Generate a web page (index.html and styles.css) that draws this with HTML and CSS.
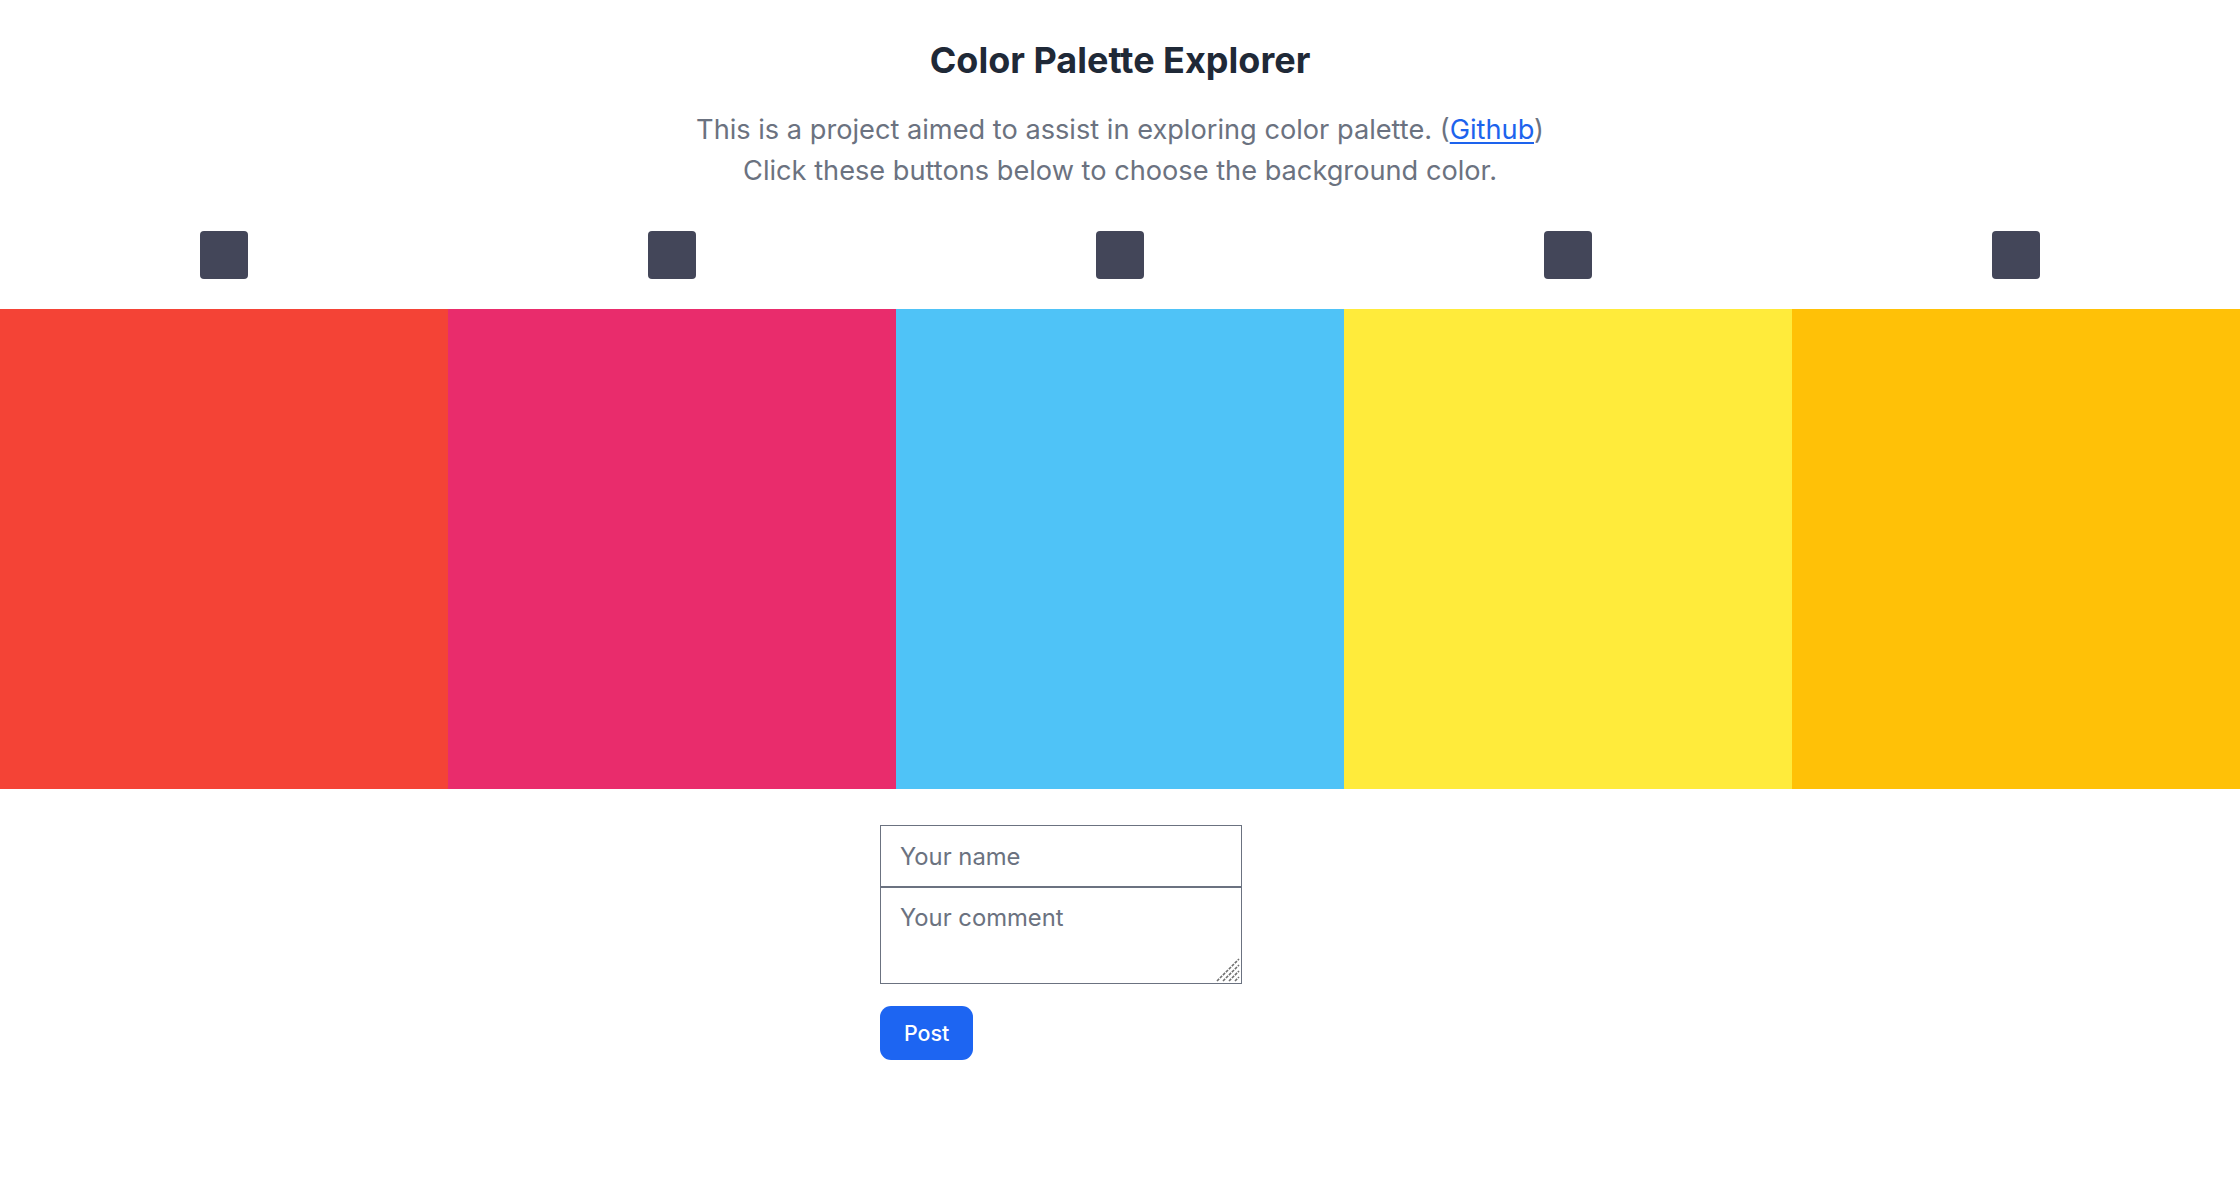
FILE: index.html
```html
<!DOCTYPE html>
<html lang="en">
<head>
<meta charset="utf-8">
<title>Color Palette Explorer</title>
<link rel="stylesheet" href="styles.css">
</head>
<body>
<header class="intro">
  <h1 class="title">Color Palette Explorer</h1>
  <p class="lead">This is a project aimed to assist in exploring color palette. (<a class="link" href="#">Github</a>)<br>Click these buttons below to choose the background color.</p>
</header>
<div class="pickers">
  <div class="picker-cell"><button class="picker" aria-label="Pick color 1"></button></div>
  <div class="picker-cell"><button class="picker" aria-label="Pick color 2"></button></div>
  <div class="picker-cell"><button class="picker" aria-label="Pick color 3"></button></div>
  <div class="picker-cell"><button class="picker" aria-label="Pick color 4"></button></div>
  <div class="picker-cell"><button class="picker" aria-label="Pick color 5"></button></div>
</div>
<div class="palette">
  <div class="swatch swatch-red"></div>
  <div class="swatch swatch-pink"></div>
  <div class="swatch swatch-blue"></div>
  <div class="swatch swatch-yellow"></div>
  <div class="swatch swatch-amber"></div>
</div>
<form class="comment-form">
  <div class="fields">
    <input class="field field-name" type="text" placeholder="Your name">
    <div class="comment-wrap">
      <textarea class="field field-comment" placeholder="Your comment"></textarea>
      <svg class="grip" width="24" height="24" viewBox="0 0 24 24" aria-hidden="true">
        <path d="M1 23 L23 1 M7 23 L23 7 M13 23 L23 13 M19 23 L23 19" stroke="#707070" stroke-width="1.6" stroke-dasharray="3 1.2" fill="none"/>
      </svg>
    </div>
  </div>
  <button class="post" type="button">Post</button>
</form>
</body>
</html>
```

FILE: styles.css
```css
* { box-sizing: border-box; }
html, body { margin: 0; padding: 0; background: #ffffff; }
body {
  font-family: Inter, "Noto Sans", "Liberation Sans", sans-serif;
  color: #1f2937;
}
.intro {
  text-align: center;
  padding-top: 37px;
}
.title {
  margin: 0;
  font-size: 36px;
  line-height: 46px;
  font-weight: 700;
  color: #1f2937;
}
.lead {
  margin: 26px 0 0;
  font-size: 27.2px;
  line-height: 41px;
  color: #6b7280;
}
.link {
  color: #1d63ed;
  text-decoration: underline;
  text-decoration-thickness: 2px;
  text-underline-offset: 3px;
}
.pickers {
  display: grid;
  grid-template-columns: repeat(5, 1fr);
  margin-top: 40px;
}
.picker-cell {
  display: flex;
  justify-content: center;
}
.picker {
  width: 48px;
  height: 48px;
  border: none;
  padding: 0;
  border-radius: 4px;
  background: #434659;
  cursor: pointer;
}
.palette {
  display: grid;
  grid-template-columns: repeat(5, 1fr);
  height: 480px;
  margin-top: 30px;
}
.swatch-red { background: #f44336; }
.swatch-pink { background: #e92c6c; }
.swatch-blue { background: #4fc3f7; }
.swatch-yellow { background: #ffeb3b; }
.swatch-amber { background: #ffc107; }
.comment-form {
  width: 480px;
  margin: 36px auto 0;
  padding-bottom: 40px;
}
.fields {
  display: flex;
  flex-direction: column;
}
.comment-wrap {
  position: relative;
  width: 362px;
}
.field {
  display: block;
  width: 362px;
  border: 1px solid #6b7280;
  border-radius: 0;
  font-family: Inter, "Noto Sans", "Liberation Sans", sans-serif;
  font-size: 23.8px;
  line-height: 34px;
  padding: 13px 19px;
  color: #1f2937;
  background: #ffffff;
  margin: 0;
}
.field::placeholder { color: #6b7280; opacity: 1; }
.field-name { height: 62px; }
.field-comment { height: 97px; resize: none; }
.grip {
  position: absolute;
  right: 2px;
  bottom: 2px;
  pointer-events: none;
}
.post {
  margin-top: 22px;
  height: 54px;
  padding: 0 24px;
  border: none;
  border-radius: 11px;
  background: #1d65f2;
  color: #ffffff;
  font-family: Inter, "Noto Sans", "Liberation Sans", sans-serif;
  font-size: 21.4px;
  font-weight: 500;
  cursor: pointer;
}
```
